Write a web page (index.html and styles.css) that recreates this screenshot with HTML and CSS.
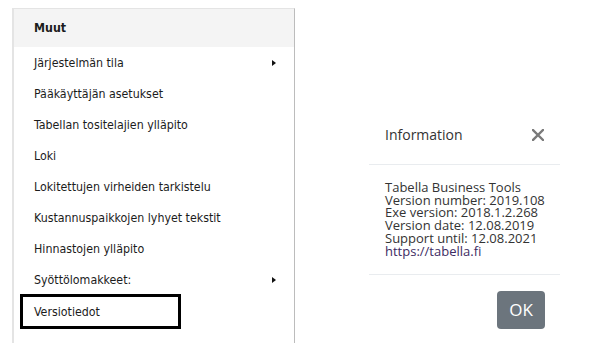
FILE: index.html
```html
<!DOCTYPE html>
<html lang="fi">
<head>
  <meta charset="UTF-8">
  <meta name="viewport" content="width=device-width, initial-scale=1.0">
  <title>Versiotiedot</title>
  <link rel="stylesheet" href="styles.css">
</head>
<body>

  <div class="page">
    <nav class="menu">
      <div class="menu-header">Muut</div>
      <ul class="menu-list">
        <li class="menu-item has-sub">Järjestelmän tila</li>
        <li class="menu-item">Pääkäyttäjän asetukset</li>
        <li class="menu-item">Tabellan tositelajien ylläpito</li>
        <li class="menu-item">Loki</li>
        <li class="menu-item">Lokitettujen virheiden tarkistelu</li>
        <li class="menu-item">Kustannuspaikkojen lyhyet tekstit</li>
        <li class="menu-item">Hinnastojen ylläpito</li>
        <li class="menu-item has-sub">Syöttölomakkeet:</li>
        <li class="menu-item"><span class="focused">Versiotiedot</span></li>
      </ul>
    </nav>

    <div class="modal">
      <div class="modal-header">
        <span class="modal-title">Information</span>
        <button class="close" type="button" aria-label="Close">
          <svg width="12" height="12" viewBox="0 0 12 12">
            <path d="M1 1 L11 11 M11 1 L1 11" stroke="#7a7a7a" stroke-width="2.4" stroke-linecap="square"/>
          </svg>
        </button>
      </div>
      <div class="modal-body">
        Tabella Business Tools<br>
        Version number: 2019.108<br>
        Exe version: 2018.1.2.268<br>
        Version date: 12.08.2019<br>
        Support until: 12.08.2021<br>
        <a href="#" class="site-link">https://tabella.fi</a>
      </div>
      <div class="modal-footer">
        <button class="btn-ok" type="button">OK</button>
      </div>
    </div>
  </div>

</body>
</html>
```

FILE: styles.css
```css
/* General Styles */
body {
  margin: 0;
  background: #fff;
  color: #1c1c1c;
}

.page {
  display: flex;
  align-items: flex-start;
  padding: 8px 0 0 12px;
}

/* Side menu */
.menu {
  box-sizing: border-box;
  width: 283px;
  height: 335px;
  border-top: 1px solid #e4e4e4;
  border-left: 2px solid #e4e4e4;
  border-right: 1px solid #bcbcbc;
  font-family: 'DejaVu Sans Condensed', 'DejaVu Sans', sans-serif;
  font-size: 12.3px;
}

.menu-header {
  height: 38px;
  line-height: 38px;
  padding-left: 20px;
  background: #f4f4f4;
  font-weight: bold;
}

.menu-list {
  list-style: none;
  margin: 0;
  padding: 0;
}

.menu-item {
  position: relative;
  height: 31px;
  line-height: 32px;
  padding-left: 20px;
}

.menu-item.has-sub::after {
  content: "";
  position: absolute;
  right: 18px;
  top: 13px;
  border-top: 3px solid transparent;
  border-bottom: 3px solid transparent;
  border-left: 4px solid #111;
}

.focused {
  display: inline-block;
  box-sizing: border-box;
  width: 161px;
  height: 35px;
  line-height: 30px;
  margin: -1px 0 0 -14px;
  padding-left: 11px;
  border: 3px solid #000;
  vertical-align: top;
}

/* Information dialog */
.modal {
  width: 191px;
  margin: 99px 0 0 74px;
  background: #fff;
  font-family: 'Open Sans', sans-serif;
  color: #333;
}

.modal-header {
  display: flex;
  justify-content: space-between;
  align-items: center;
  padding: 17px 16px 18px 16px;
  border-bottom: 1px solid #e9ecef;
}

.modal-title {
  font-size: 14px;
  line-height: 22px;
}

.close {
  border: none;
  background: none;
  padding: 0;
  width: 12px;
  height: 12px;
  display: flex;
}

.modal-body {
  padding: 16px 16px 17px 16px;
  font-size: 13px;
  line-height: 12.7px;
  white-space: nowrap;
}

.site-link {
  color: #3d2b63;
  text-decoration: none;
}

.modal-footer {
  display: flex;
  justify-content: flex-end;
  padding: 16px 15px 16px 16px;
  border-top: 1px solid #e9ecef;
}

.btn-ok {
  font-family: 'Open Sans', sans-serif;
  font-size: 17px;
  line-height: 26px;
  padding: 6px 12px;
  color: #fff;
  background: #6c757d;
  border: none;
  border-radius: 4px;
}
```
